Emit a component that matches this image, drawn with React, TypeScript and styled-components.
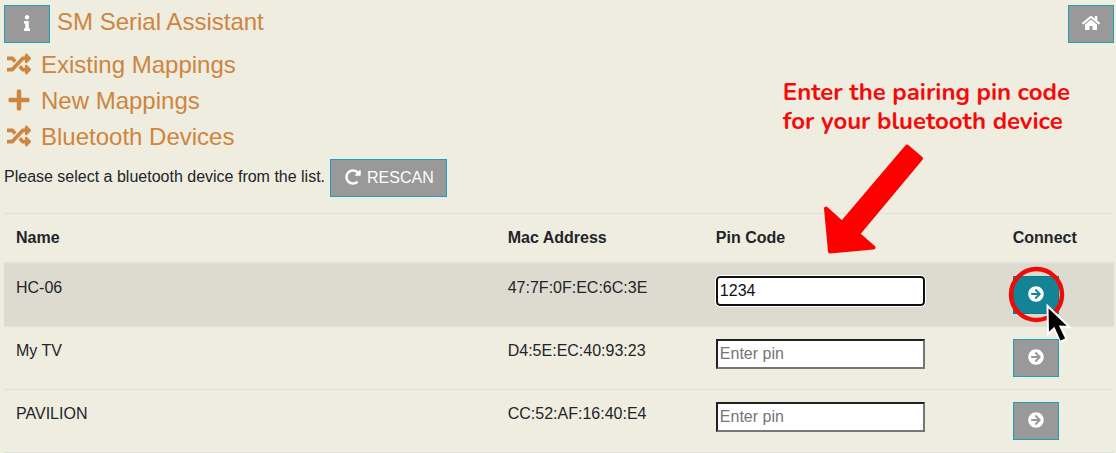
import React, { useState } from 'react';
import styled, { createGlobalStyle, css } from 'styled-components';
import { FaArrowCircleRight, FaHome, FaInfo, FaPlus, FaRandom, FaRedoAlt } from 'react-icons/fa';

const GlobalStyle = createGlobalStyle`
  *, *::before, *::after { box-sizing: border-box; }
  body {
    margin: 0;
    background: #efede0;
    color: #212529;
    font: 16px/24px "Liberation Sans", Arial, sans-serif;
  }
`;

const Page = styled.main`
  padding: 5px 2px 0 4px;
`;

const TopBar = styled.header`
  display: flex;
  align-items: flex-start;
  gap: 7px;
`;

const Title = styled.h1`
  flex: 1;
  margin: 0;
  padding-top: 2px;
  color: #cd853f;
  font-size: 24px;
  font-weight: 400;
  line-height: 29px;
`;

const Button = styled.button<{ $active?: boolean }>`
  display: inline-flex;
  align-items: center;
  gap: 4px;
  height: 38px;
  padding: 6px 12px;
  border: 1px solid #17a2b8;
  background: #999;
  color: #fff;
  font: inherit;
  cursor: pointer;
  ${(p) => p.$active && css`
    background: #138496;
    border-color: #117a8b;
  `}
`;

const IconSlot = styled.span`
  display: inline-flex;
  justify-content: center;
  width: 20px;
  padding-bottom: 2px;
`;

const Sections = styled.nav`
  display: flex;
  flex-direction: column;
  gap: 7px;
  padding-top: 7px;
`;

const SectionHeading = styled.h2`
  display: flex;
  align-items: center;
  gap: 7px;
  margin: 0;
  color: #cd853f;
  font-size: 24px;
  font-weight: 400;
  line-height: 29px;
`;

const HeadingIcon = styled.span`
  display: flex;
  justify-content: center;
  width: 30px;
  padding-bottom: 2px;
`;

const ScanRow = styled.div`
  display: flex;
  align-items: center;
  gap: 5px;
  padding: 8px 0 16px;
`;

const Prompt = styled.p`
  margin: 0;
  padding-bottom: 2px;
`;

const DeviceTable = styled.table`
  width: 100%;
  table-layout: fixed;
  border-collapse: separate;
  border-spacing: 0;
`;

const HeadCell = styled.th<{ $width?: string }>`
  width: ${(p) => p.$width ?? 'auto'};
  padding: 12px;
  border-top: 1px solid #dee0dc;
  border-bottom: 2px solid #dee0dc;
  text-align: left;
  font-weight: 700;
`;

const Row = styled.tr<{ $active: boolean }>`
  background: ${(p) => (p.$active ? '#dddbcf' : 'transparent')};
`;

const Cell = styled.td`
  padding: 12px;
  border-bottom: 1px solid #dee0dc;
  vertical-align: top;
`;

const Anchor = styled.div`
  position: relative;
  display: flex;
  width: fit-content;
`;

const PinInput = styled.input<{ $active: boolean }>`
  display: block;
  width: 209px;
  height: 30px;
  padding: 1px 2px;
  border: 2px inset #767676;
  background: #fff;
  color: #111;
  font: inherit;
  &::placeholder { color: #757575; }
  &:focus { outline-offset: 0; }
  ${(p) => p.$active && css`
    border: 2px solid #101010;
    border-radius: 4px;
    outline: 1px solid #fff;
  `}
`;

const Note = styled.p`
  position: absolute;
  left: 67px;
  bottom: 114px;
  margin: 0;
  color: #f40a0a;
  font: 700 24px/29px Nunito, Lato, sans-serif;
  white-space: nowrap;
  pointer-events: none;
`;

const Arrow = styled.svg`
  position: absolute;
  left: 106px;
  top: -84px;
  pointer-events: none;
`;

const Ring = styled.svg`
  position: absolute;
  left: -5px;
  top: -10px;
  pointer-events: none;
`;

const devices = [
  { name: 'HC-06', mac: '47:7F:0F:EC:6C:3E', pin: '1234' },
  { name: 'My TV', mac: 'D4:5E:EC:40:93:23', pin: '' },
  { name: 'PAVILION', mac: 'CC:52:AF:16:40:E4', pin: '' },
];

const sections = [
  { label: 'Existing Mappings', Icon: FaRandom },
  { label: 'New Mappings', Icon: FaPlus },
  { label: 'Bluetooth Devices', Icon: FaRandom },
];

export default function App() {
  const [pins, setPins] = useState(devices.map((d) => d.pin));
  const [active, setActive] = useState(0);

  return (
    <>
      <GlobalStyle />
      <Page>
        <TopBar>
          <Button type="button" aria-label="Information"><IconSlot><FaInfo /></IconSlot></Button>
          <Title>SM Serial Assistant</Title>
          <Button type="button" aria-label="Home"><IconSlot><FaHome size={18} /></IconSlot></Button>
        </TopBar>
        <Sections>
          {sections.map(({ label, Icon }) => (
            <SectionHeading key={label}>
              <HeadingIcon><Icon /></HeadingIcon>
              {label}
            </SectionHeading>
          ))}
        </Sections>
        <ScanRow>
          <Prompt>Please select a bluetooth device from the list.</Prompt>
          <Button type="button"><IconSlot><FaRedoAlt /></IconSlot>RESCAN</Button>
        </ScanRow>
        <DeviceTable>
          <thead>
            <tr>
              <HeadCell $width="44.3%">Name</HeadCell>
              <HeadCell $width="18.75%">Mac Address</HeadCell>
              <HeadCell $width="26.75%">
                <Anchor>
                  Pin Code
                  <Note>Enter the pairing pin code<br />for your bluetooth device</Note>
                  <Arrow width="104" height="114" viewBox="0 0 104 114" aria-hidden="true">
                    <path
                      d="M85 4.500L99 16.500L36 92L51.500 105.500L8 109.500L4 66.500L20 81Z"
                      fill="#f00" stroke="#f00" strokeWidth="4" strokeLinejoin="round"
                    />
                  </Arrow>
                </Anchor>
              </HeadCell>
              <HeadCell>Connect</HeadCell>
            </tr>
          </thead>
          <tbody>
            {devices.map((d, i) => (
              <Row key={d.mac} $active={i === active}>
                <Cell>{d.name}</Cell>
                <Cell>{d.mac}</Cell>
                <Cell>
                  <PinInput
                    $active={i === active}
                    aria-label={`Pin code for ${d.name}`}
                    placeholder="Enter pin"
                    value={pins[i]}
                    onFocus={() => setActive(i)}
                    onChange={(e) => setPins(pins.map((p, n) => (n === i ? e.target.value : p)))}
                  />
                </Cell>
                <Cell>
                  <Anchor>
                    <Button type="button" $active={i === active} aria-label={`Connect ${d.name}`}>
                      <IconSlot><FaArrowCircleRight /></IconSlot>
                    </Button>
                    {i === active && (
                      <Ring width="66" height="78" viewBox="0 0 66 78" aria-hidden="true">
                        <circle cx="28.5" cy="28.5" r="25.5" fill="none" stroke="#f00b0b" strokeWidth="4.5" />
                        <path
                          d="M39.500 40L40 68L46 62.500L52 76L58.500 73L52.500 60.500L61.500 61Z"
                          fill="#000" stroke="#fff" strokeWidth="2"
                        />
                      </Ring>
                    )}
                  </Anchor>
                </Cell>
              </Row>
            ))}
          </tbody>
        </DeviceTable>
      </Page>
    </>
  );
}
